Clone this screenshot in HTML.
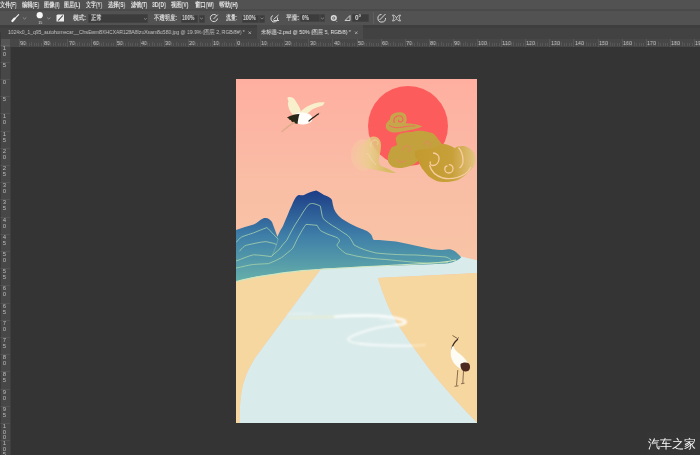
<!DOCTYPE html>
<html><head><meta charset="utf-8">
<style>
*{margin:0;padding:0;box-sizing:border-box}
html,body{width:700px;height:455px;overflow:hidden;background:#353535;font-family:"Liberation Sans",sans-serif;}
.abs{position:absolute}
#menu{left:0;top:0;width:700px;height:9px;background:#525252}
#mline{left:0;top:9px;width:700px;height:2px;background:#4a4a4a}
#opts{left:0;top:11px;width:700px;height:14px;background:#525252}
#strip{left:0;top:25px;width:700px;height:3px;background:#3e3e3e}
#tabs{left:0;top:28px;width:700px;height:11px;background:#424242}
#hruler{left:0;top:39px;width:700px;height:8px;background:#474747}
#vruler{left:0;top:47px;width:11px;height:408px;background:#474747}
#canvas{left:11px;top:47px;width:689px;height:408px;background:#343434}
#art{left:236px;top:79px;width:241px;height:344px;overflow:hidden}
.t{position:absolute;color:#d8d8d8;white-space:nowrap;line-height:1;will-change:transform}
.mi{font-size:6.5px;color:#e4e4e4;font-weight:bold;transform-origin:0 0}
.ol{font-size:6.5px;color:#dcdcdc;font-weight:bold;transform-origin:0 0}
.tt{font-size:5.8px;color:#c4c4c4;transform-origin:0 0}
.act{color:#e8e8e8}
.hr{font-size:6px;color:#c4c4c4;transform-origin:0 0}
.vr{left:2px;font-size:6px;color:#bcbcbc;width:5px;text-align:center}
.vr span{display:block;height:5.5px;line-height:5.5px}
.box{background:#3c3c3c;box-shadow:inset 0 0 0 0.5px #4a4a4a}
.tick{position:absolute;width:1px;background:#b0b0b0}
</style></head><body>
<div id="menu" class="abs"></div>
<div id="mline" class="abs"></div>
<div id="opts" class="abs"></div>
<div id="strip" class="abs"></div>
<div id="tabs" class="abs"></div>
<div id="hruler" class="abs"></div>
<div id="vruler" class="abs"></div>
<div id="canvas" class="abs"></div>














<!--UI-->
<div class="abs" style="left:1px;top:39px;width:9px;height:8px;background:#555555"></div>
<div class="abs" style="left:0;top:32px;width:1px;height:423px;background:#3a3a3a"></div>
<div class="abs" style="left:10px;top:47px;width:1px;height:408px;background:#3e3e3e"></div>
<div class="abs" style="left:256.5px;top:25px;width:106px;height:14px;background:#4b4b4b"></div>
<div class="abs box" style="left:87.5px;top:14px;width:60.5px;height:9px"></div>
<div class="abs box" style="left:180.5px;top:14.5px;width:17px;height:8px"></div>
<div class="abs box" style="left:198.5px;top:14.5px;width:6px;height:8px"></div>
<div class="abs box" style="left:241.5px;top:14.5px;width:17px;height:8px"></div>
<div class="abs box" style="left:259px;top:14.5px;width:6px;height:8px"></div>
<div class="abs box" style="left:300px;top:14px;width:20px;height:8px"></div>
<div class="abs box" style="left:320px;top:14px;width:5px;height:8px"></div>
<div class="abs box" style="left:351.5px;top:14px;width:17.5px;height:8px"></div>
<div class="abs" style="left:372.5px;top:12px;width:1px;height:12px;background:#5e5e5e"></div>
<svg class="abs" style="left:0;top:0;will-change:transform" width="420" height="40" viewBox="0 0 420 40">
<g fill="none" stroke-linecap="round">
<path d="M12.8,20.6 L18.6,14.6" stroke="#e8e8e8" stroke-width="1.2"/>
<path d="M12.4,21 L14.6,18.6" stroke="#f4f4f4" stroke-width="2.2"/>
<path d="M23.2,17.8 L24.6,19 L26,17.8" stroke="#9a9a9a" stroke-width="0.8"/>
<path d="M47.4,17.8 L48.8,19 L50.2,17.8" stroke="#9a9a9a" stroke-width="0.8"/>
<path d="M144.3,18.5 L145.4,19.5 L146.5,18.5" stroke="#a0a0a0" stroke-width="0.7"/>
<path d="M200.3,18 L201.5,19 L202.7,18" stroke="#a0a0a0" stroke-width="0.7"/>
<path d="M260.8,18 L262,19 L263.2,18" stroke="#a0a0a0" stroke-width="0.7"/>
<path d="M321.3,18 L322.5,19 L323.7,18" stroke="#a0a0a0" stroke-width="0.7"/>
</g>
<circle cx="39.7" cy="15.2" r="3.1" fill="#f6f6f6"/>
<text x="38.2" y="23.6" font-size="3.8" fill="#d8d8d8" font-family="Liberation Sans">15</text>
<path d="M57.5,14.5 L64,14.5 L64,21.5 L56.5,21.5 L56.5,15.5 Z" fill="#ececec"/>
<path d="M58.2,20.5 L62.8,15.5" stroke="#3a3a3a" stroke-width="1.1"/>
<g fill="none" stroke="#d8d8d8" stroke-width="1">
<path d="M216.5,15.5 A3.6,3.6 0 1 0 217.5,18.5"/>
<path d="M213.5,19 L217.8,14.6"/>
<path d="M277.5,17.5 A3.4,3.4 0 1 1 273,15.5"/>
<path d="M273.5,19.5 L278.5,15"/>
<path d="M273.5,20.5 L279,20.5"/>
<path d="M345,20.5 L350,15.5 L350,20.5 Z" stroke-width="0.9"/>
<path d="M385.5,18 A3.8,3.8 0 1 1 381.5,14.5"/>
<path d="M379.5,20 L385.5,14"/>
<path d="M392.5,15 C395,15 396,17 396.5,18 C397,17 398,15 400.5,15 L399,18 L400.5,21 C398,21 397,19.5 396.5,18.5 C396,19.5 395,21 392.5,21 L394,18 Z" stroke-width="0.8"/>
</g>
<circle cx="333.8" cy="18" r="2.3" fill="none" stroke="#dcdcdc" stroke-width="1.5"/>
<circle cx="333.8" cy="18" r="0.8" fill="#dcdcdc"/>
<circle cx="336.8" cy="21.5" r="0.5" fill="#bbb"/>
<path d="M248.5,31.5 L251,34 M251,31.5 L248.5,34 M355,31.5 L357.5,34 M357.5,31.5 L355,34" stroke="#bdbdbd" stroke-width="0.7"/>
</svg>
<div id="m0" class="t mi" style="left:0px;top:1.5px;transform:scaleX(0.739);">文件(F)</div>
<div id="m1" class="t mi" style="left:21.5px;top:1.5px;transform:scaleX(0.750);">编辑(E)</div>
<div id="m2" class="t mi" style="left:43.5px;top:1.5px;transform:scaleX(0.770);">图像(I)</div>
<div id="m3" class="t mi" style="left:64px;top:1.5px;transform:scaleX(0.717);">图层(L)</div>
<div id="m4" class="t mi" style="left:86px;top:1.5px;transform:scaleX(0.706);">文字(Y)</div>
<div id="m5" class="t mi" style="left:108px;top:1.5px;transform:scaleX(0.750);">选择(S)</div>
<div id="m6" class="t mi" style="left:131px;top:1.5px;transform:scaleX(0.731);">滤镜(T)</div>
<div id="m7" class="t mi" style="left:152.4px;top:1.5px;transform:scaleX(0.796);">3D(D)</div>
<div id="m8" class="t mi" style="left:171.3px;top:1.5px;transform:scaleX(0.759);">视图(V)</div>
<div id="m9" class="t mi" style="left:194.5px;top:1.5px;transform:scaleX(0.768);">窗口(W)</div>
<div id="m10" class="t mi" style="left:218.5px;top:1.5px;transform:scaleX(0.816);">帮助(H)</div>
<div id="o1" class="t ol" style="left:72.5px;top:14.5px;transform:scaleX(0.798);">模式:</div>
<div id="o2" class="t ol" style="left:91.1px;top:14.5px;transform:scaleX(0.779);">正常</div>
<div id="o3" class="t ol" style="left:154px;top:14.5px;transform:scaleX(0.762);">不透明度:</div>
<div id="o4" class="t ol" style="left:182px;top:15px;transform:scaleX(0.752);">100%</div>
<div id="o5" class="t ol" style="left:225.7px;top:14.5px;transform:scaleX(0.699);">流量:</div>
<div id="o6" class="t ol" style="left:242.5px;top:15px;transform:scaleX(0.782);">100%</div>
<div id="o7" class="t ol" style="left:286px;top:14.5px;transform:scaleX(0.804);">平滑:</div>
<div id="o8" class="t ol" style="left:302px;top:15px;transform:scaleX(0.744);">0%</div>
<div id="o9" class="t ol" style="left:355px;top:15px;transform:scaleX(0.965);">0°</div>
<div id="tb1" class="t tt" style="left:8.2px;top:30px;transform:scaleX(0.868);">1024x0_1_q95_autohomecar__ChsEwm8XHCXAR128A8IzuXsam8o580.jpg @ 19.9% (图层 2, RGB/8#) *</div>
<div id="tb2" class="t tt act" style="left:261.1px;top:30px;transform:scaleX(0.885);">未标题-2.psd @ 50% (图层 5, RGB/8) *</div>
<div class="tick" style="left:19.1px;top:39px;height:8px;opacity:.15"></div>
<div id="h0" class="t hr" style="left:20.299999999999994px;top:40px;transform:scaleX(0.897);">90</div>
<div class="tick" style="left:21.5px;top:43px;height:3px;opacity:.16"></div>
<div class="tick" style="left:23.9px;top:43px;height:3px;opacity:.16"></div>
<div class="tick" style="left:26.3px;top:43px;height:3px;opacity:.16"></div>
<div class="tick" style="left:28.7px;top:43px;height:3px;opacity:.16"></div>
<div class="tick" style="left:31.1px;top:42px;height:4px;opacity:.16"></div>
<div class="tick" style="left:33.6px;top:43px;height:3px;opacity:.16"></div>
<div class="tick" style="left:36.0px;top:43px;height:3px;opacity:.16"></div>
<div class="tick" style="left:38.4px;top:43px;height:3px;opacity:.16"></div>
<div class="tick" style="left:40.8px;top:43px;height:3px;opacity:.16"></div>
<div class="tick" style="left:43.2px;top:39px;height:8px;opacity:.15"></div>
<div id="h1" class="t hr" style="left:44.39999999999999px;top:40px;transform:scaleX(0.897);">80</div>
<div class="tick" style="left:45.6px;top:43px;height:3px;opacity:.16"></div>
<div class="tick" style="left:48.0px;top:43px;height:3px;opacity:.16"></div>
<div class="tick" style="left:50.4px;top:43px;height:3px;opacity:.16"></div>
<div class="tick" style="left:52.8px;top:43px;height:3px;opacity:.16"></div>
<div class="tick" style="left:55.2px;top:42px;height:4px;opacity:.16"></div>
<div class="tick" style="left:57.7px;top:43px;height:3px;opacity:.16"></div>
<div class="tick" style="left:60.1px;top:43px;height:3px;opacity:.16"></div>
<div class="tick" style="left:62.5px;top:43px;height:3px;opacity:.16"></div>
<div class="tick" style="left:64.9px;top:43px;height:3px;opacity:.16"></div>
<div class="tick" style="left:67.3px;top:39px;height:8px;opacity:.15"></div>
<div id="h2" class="t hr" style="left:68.49999999999999px;top:40px;transform:scaleX(0.897);">70</div>
<div class="tick" style="left:69.7px;top:43px;height:3px;opacity:.16"></div>
<div class="tick" style="left:72.1px;top:43px;height:3px;opacity:.16"></div>
<div class="tick" style="left:74.5px;top:43px;height:3px;opacity:.16"></div>
<div class="tick" style="left:76.9px;top:43px;height:3px;opacity:.16"></div>
<div class="tick" style="left:79.3px;top:42px;height:4px;opacity:.16"></div>
<div class="tick" style="left:81.8px;top:43px;height:3px;opacity:.16"></div>
<div class="tick" style="left:84.2px;top:43px;height:3px;opacity:.16"></div>
<div class="tick" style="left:86.6px;top:43px;height:3px;opacity:.16"></div>
<div class="tick" style="left:89.0px;top:43px;height:3px;opacity:.16"></div>
<div class="tick" style="left:91.4px;top:39px;height:8px;opacity:.15"></div>
<div id="h3" class="t hr" style="left:92.59999999999998px;top:40px;transform:scaleX(0.897);">60</div>
<div class="tick" style="left:93.8px;top:43px;height:3px;opacity:.16"></div>
<div class="tick" style="left:96.2px;top:43px;height:3px;opacity:.16"></div>
<div class="tick" style="left:98.6px;top:43px;height:3px;opacity:.16"></div>
<div class="tick" style="left:101.0px;top:43px;height:3px;opacity:.16"></div>
<div class="tick" style="left:103.4px;top:42px;height:4px;opacity:.16"></div>
<div class="tick" style="left:105.9px;top:43px;height:3px;opacity:.16"></div>
<div class="tick" style="left:108.3px;top:43px;height:3px;opacity:.16"></div>
<div class="tick" style="left:110.7px;top:43px;height:3px;opacity:.16"></div>
<div class="tick" style="left:113.1px;top:43px;height:3px;opacity:.16"></div>
<div class="tick" style="left:115.5px;top:39px;height:8px;opacity:.15"></div>
<div id="h4" class="t hr" style="left:116.7px;top:40px;transform:scaleX(0.897);">50</div>
<div class="tick" style="left:117.9px;top:43px;height:3px;opacity:.16"></div>
<div class="tick" style="left:120.3px;top:43px;height:3px;opacity:.16"></div>
<div class="tick" style="left:122.7px;top:43px;height:3px;opacity:.16"></div>
<div class="tick" style="left:125.1px;top:43px;height:3px;opacity:.16"></div>
<div class="tick" style="left:127.5px;top:42px;height:4px;opacity:.16"></div>
<div class="tick" style="left:130.0px;top:43px;height:3px;opacity:.16"></div>
<div class="tick" style="left:132.4px;top:43px;height:3px;opacity:.16"></div>
<div class="tick" style="left:134.8px;top:43px;height:3px;opacity:.16"></div>
<div class="tick" style="left:137.2px;top:43px;height:3px;opacity:.16"></div>
<div class="tick" style="left:139.6px;top:39px;height:8px;opacity:.15"></div>
<div id="h5" class="t hr" style="left:140.79999999999998px;top:40px;transform:scaleX(0.897);">40</div>
<div class="tick" style="left:142.0px;top:43px;height:3px;opacity:.16"></div>
<div class="tick" style="left:144.4px;top:43px;height:3px;opacity:.16"></div>
<div class="tick" style="left:146.8px;top:43px;height:3px;opacity:.16"></div>
<div class="tick" style="left:149.2px;top:43px;height:3px;opacity:.16"></div>
<div class="tick" style="left:151.7px;top:42px;height:4px;opacity:.16"></div>
<div class="tick" style="left:154.1px;top:43px;height:3px;opacity:.16"></div>
<div class="tick" style="left:156.5px;top:43px;height:3px;opacity:.16"></div>
<div class="tick" style="left:158.9px;top:43px;height:3px;opacity:.16"></div>
<div class="tick" style="left:161.3px;top:43px;height:3px;opacity:.16"></div>
<div class="tick" style="left:163.7px;top:39px;height:8px;opacity:.15"></div>
<div id="h6" class="t hr" style="left:164.89999999999998px;top:40px;transform:scaleX(0.897);">30</div>
<div class="tick" style="left:166.1px;top:43px;height:3px;opacity:.16"></div>
<div class="tick" style="left:168.5px;top:43px;height:3px;opacity:.16"></div>
<div class="tick" style="left:170.9px;top:43px;height:3px;opacity:.16"></div>
<div class="tick" style="left:173.3px;top:43px;height:3px;opacity:.16"></div>
<div class="tick" style="left:175.8px;top:42px;height:4px;opacity:.16"></div>
<div class="tick" style="left:178.2px;top:43px;height:3px;opacity:.16"></div>
<div class="tick" style="left:180.6px;top:43px;height:3px;opacity:.16"></div>
<div class="tick" style="left:183.0px;top:43px;height:3px;opacity:.16"></div>
<div class="tick" style="left:185.4px;top:43px;height:3px;opacity:.16"></div>
<div class="tick" style="left:187.8px;top:39px;height:8px;opacity:.15"></div>
<div id="h7" class="t hr" style="left:189.0px;top:40px;transform:scaleX(0.897);">20</div>
<div class="tick" style="left:190.2px;top:43px;height:3px;opacity:.16"></div>
<div class="tick" style="left:192.6px;top:43px;height:3px;opacity:.16"></div>
<div class="tick" style="left:195.0px;top:43px;height:3px;opacity:.16"></div>
<div class="tick" style="left:197.4px;top:43px;height:3px;opacity:.16"></div>
<div class="tick" style="left:199.9px;top:42px;height:4px;opacity:.16"></div>
<div class="tick" style="left:202.3px;top:43px;height:3px;opacity:.16"></div>
<div class="tick" style="left:204.7px;top:43px;height:3px;opacity:.16"></div>
<div class="tick" style="left:207.1px;top:43px;height:3px;opacity:.16"></div>
<div class="tick" style="left:209.5px;top:43px;height:3px;opacity:.16"></div>
<div class="tick" style="left:211.9px;top:39px;height:8px;opacity:.15"></div>
<div id="h8" class="t hr" style="left:213.1px;top:40px;transform:scaleX(0.897);">10</div>
<div class="tick" style="left:214.3px;top:43px;height:3px;opacity:.16"></div>
<div class="tick" style="left:216.7px;top:43px;height:3px;opacity:.16"></div>
<div class="tick" style="left:219.1px;top:43px;height:3px;opacity:.16"></div>
<div class="tick" style="left:221.5px;top:43px;height:3px;opacity:.16"></div>
<div class="tick" style="left:224.0px;top:42px;height:4px;opacity:.16"></div>
<div class="tick" style="left:226.4px;top:43px;height:3px;opacity:.16"></div>
<div class="tick" style="left:228.8px;top:43px;height:3px;opacity:.16"></div>
<div class="tick" style="left:231.2px;top:43px;height:3px;opacity:.16"></div>
<div class="tick" style="left:233.6px;top:43px;height:3px;opacity:.16"></div>
<div class="tick" style="left:236.0px;top:39px;height:8px;opacity:.15"></div>
<div id="h9" class="t hr" style="left:237.2px;top:40px;transform:scaleX(0.897);">0</div>
<div class="tick" style="left:238.4px;top:43px;height:3px;opacity:.16"></div>
<div class="tick" style="left:240.8px;top:43px;height:3px;opacity:.16"></div>
<div class="tick" style="left:243.2px;top:43px;height:3px;opacity:.16"></div>
<div class="tick" style="left:245.6px;top:43px;height:3px;opacity:.16"></div>
<div class="tick" style="left:248.1px;top:42px;height:4px;opacity:.16"></div>
<div class="tick" style="left:250.5px;top:43px;height:3px;opacity:.16"></div>
<div class="tick" style="left:252.9px;top:43px;height:3px;opacity:.16"></div>
<div class="tick" style="left:255.3px;top:43px;height:3px;opacity:.16"></div>
<div class="tick" style="left:257.7px;top:43px;height:3px;opacity:.16"></div>
<div class="tick" style="left:260.1px;top:39px;height:8px;opacity:.15"></div>
<div id="h10" class="t hr" style="left:261.3px;top:40px;transform:scaleX(0.897);">10</div>
<div class="tick" style="left:262.5px;top:43px;height:3px;opacity:.16"></div>
<div class="tick" style="left:264.9px;top:43px;height:3px;opacity:.16"></div>
<div class="tick" style="left:267.3px;top:43px;height:3px;opacity:.16"></div>
<div class="tick" style="left:269.7px;top:43px;height:3px;opacity:.16"></div>
<div class="tick" style="left:272.2px;top:42px;height:4px;opacity:.16"></div>
<div class="tick" style="left:274.6px;top:43px;height:3px;opacity:.16"></div>
<div class="tick" style="left:277.0px;top:43px;height:3px;opacity:.16"></div>
<div class="tick" style="left:279.4px;top:43px;height:3px;opacity:.16"></div>
<div class="tick" style="left:281.8px;top:43px;height:3px;opacity:.16"></div>
<div class="tick" style="left:284.2px;top:39px;height:8px;opacity:.15"></div>
<div id="h11" class="t hr" style="left:285.4px;top:40px;transform:scaleX(0.897);">20</div>
<div class="tick" style="left:286.6px;top:43px;height:3px;opacity:.16"></div>
<div class="tick" style="left:289.0px;top:43px;height:3px;opacity:.16"></div>
<div class="tick" style="left:291.4px;top:43px;height:3px;opacity:.16"></div>
<div class="tick" style="left:293.8px;top:43px;height:3px;opacity:.16"></div>
<div class="tick" style="left:296.2px;top:42px;height:4px;opacity:.16"></div>
<div class="tick" style="left:298.7px;top:43px;height:3px;opacity:.16"></div>
<div class="tick" style="left:301.1px;top:43px;height:3px;opacity:.16"></div>
<div class="tick" style="left:303.5px;top:43px;height:3px;opacity:.16"></div>
<div class="tick" style="left:305.9px;top:43px;height:3px;opacity:.16"></div>
<div class="tick" style="left:308.3px;top:39px;height:8px;opacity:.15"></div>
<div id="h12" class="t hr" style="left:309.5px;top:40px;transform:scaleX(0.897);">30</div>
<div class="tick" style="left:310.7px;top:43px;height:3px;opacity:.16"></div>
<div class="tick" style="left:313.1px;top:43px;height:3px;opacity:.16"></div>
<div class="tick" style="left:315.5px;top:43px;height:3px;opacity:.16"></div>
<div class="tick" style="left:317.9px;top:43px;height:3px;opacity:.16"></div>
<div class="tick" style="left:320.4px;top:42px;height:4px;opacity:.16"></div>
<div class="tick" style="left:322.8px;top:43px;height:3px;opacity:.16"></div>
<div class="tick" style="left:325.2px;top:43px;height:3px;opacity:.16"></div>
<div class="tick" style="left:327.6px;top:43px;height:3px;opacity:.16"></div>
<div class="tick" style="left:330.0px;top:43px;height:3px;opacity:.16"></div>
<div class="tick" style="left:332.4px;top:39px;height:8px;opacity:.15"></div>
<div id="h13" class="t hr" style="left:333.59999999999997px;top:40px;transform:scaleX(0.897);">40</div>
<div class="tick" style="left:334.8px;top:43px;height:3px;opacity:.16"></div>
<div class="tick" style="left:337.2px;top:43px;height:3px;opacity:.16"></div>
<div class="tick" style="left:339.6px;top:43px;height:3px;opacity:.16"></div>
<div class="tick" style="left:342.0px;top:43px;height:3px;opacity:.16"></div>
<div class="tick" style="left:344.4px;top:42px;height:4px;opacity:.16"></div>
<div class="tick" style="left:346.9px;top:43px;height:3px;opacity:.16"></div>
<div class="tick" style="left:349.3px;top:43px;height:3px;opacity:.16"></div>
<div class="tick" style="left:351.7px;top:43px;height:3px;opacity:.16"></div>
<div class="tick" style="left:354.1px;top:43px;height:3px;opacity:.16"></div>
<div class="tick" style="left:356.5px;top:39px;height:8px;opacity:.15"></div>
<div id="h14" class="t hr" style="left:357.7px;top:40px;transform:scaleX(0.897);">50</div>
<div class="tick" style="left:358.9px;top:43px;height:3px;opacity:.16"></div>
<div class="tick" style="left:361.3px;top:43px;height:3px;opacity:.16"></div>
<div class="tick" style="left:363.7px;top:43px;height:3px;opacity:.16"></div>
<div class="tick" style="left:366.1px;top:43px;height:3px;opacity:.16"></div>
<div class="tick" style="left:368.6px;top:42px;height:4px;opacity:.16"></div>
<div class="tick" style="left:371.0px;top:43px;height:3px;opacity:.16"></div>
<div class="tick" style="left:373.4px;top:43px;height:3px;opacity:.16"></div>
<div class="tick" style="left:375.8px;top:43px;height:3px;opacity:.16"></div>
<div class="tick" style="left:378.2px;top:43px;height:3px;opacity:.16"></div>
<div class="tick" style="left:380.6px;top:39px;height:8px;opacity:.15"></div>
<div id="h15" class="t hr" style="left:381.8px;top:40px;transform:scaleX(0.897);">60</div>
<div class="tick" style="left:383.0px;top:43px;height:3px;opacity:.16"></div>
<div class="tick" style="left:385.4px;top:43px;height:3px;opacity:.16"></div>
<div class="tick" style="left:387.8px;top:43px;height:3px;opacity:.16"></div>
<div class="tick" style="left:390.2px;top:43px;height:3px;opacity:.16"></div>
<div class="tick" style="left:392.7px;top:42px;height:4px;opacity:.16"></div>
<div class="tick" style="left:395.1px;top:43px;height:3px;opacity:.16"></div>
<div class="tick" style="left:397.5px;top:43px;height:3px;opacity:.16"></div>
<div class="tick" style="left:399.9px;top:43px;height:3px;opacity:.16"></div>
<div class="tick" style="left:402.3px;top:43px;height:3px;opacity:.16"></div>
<div class="tick" style="left:404.7px;top:39px;height:8px;opacity:.15"></div>
<div id="h16" class="t hr" style="left:405.90000000000003px;top:40px;transform:scaleX(0.897);">70</div>
<div class="tick" style="left:407.1px;top:43px;height:3px;opacity:.16"></div>
<div class="tick" style="left:409.5px;top:43px;height:3px;opacity:.16"></div>
<div class="tick" style="left:411.9px;top:43px;height:3px;opacity:.16"></div>
<div class="tick" style="left:414.3px;top:43px;height:3px;opacity:.16"></div>
<div class="tick" style="left:416.8px;top:42px;height:4px;opacity:.16"></div>
<div class="tick" style="left:419.2px;top:43px;height:3px;opacity:.16"></div>
<div class="tick" style="left:421.6px;top:43px;height:3px;opacity:.16"></div>
<div class="tick" style="left:424.0px;top:43px;height:3px;opacity:.16"></div>
<div class="tick" style="left:426.4px;top:43px;height:3px;opacity:.16"></div>
<div class="tick" style="left:428.8px;top:39px;height:8px;opacity:.15"></div>
<div id="h17" class="t hr" style="left:430.0px;top:40px;transform:scaleX(0.897);">80</div>
<div class="tick" style="left:431.2px;top:43px;height:3px;opacity:.16"></div>
<div class="tick" style="left:433.6px;top:43px;height:3px;opacity:.16"></div>
<div class="tick" style="left:436.0px;top:43px;height:3px;opacity:.16"></div>
<div class="tick" style="left:438.4px;top:43px;height:3px;opacity:.16"></div>
<div class="tick" style="left:440.9px;top:42px;height:4px;opacity:.16"></div>
<div class="tick" style="left:443.3px;top:43px;height:3px;opacity:.16"></div>
<div class="tick" style="left:445.7px;top:43px;height:3px;opacity:.16"></div>
<div class="tick" style="left:448.1px;top:43px;height:3px;opacity:.16"></div>
<div class="tick" style="left:450.5px;top:43px;height:3px;opacity:.16"></div>
<div class="tick" style="left:452.9px;top:39px;height:8px;opacity:.15"></div>
<div id="h18" class="t hr" style="left:454.09999999999997px;top:40px;transform:scaleX(0.897);">90</div>
<div class="tick" style="left:455.3px;top:43px;height:3px;opacity:.16"></div>
<div class="tick" style="left:457.7px;top:43px;height:3px;opacity:.16"></div>
<div class="tick" style="left:460.1px;top:43px;height:3px;opacity:.16"></div>
<div class="tick" style="left:462.5px;top:43px;height:3px;opacity:.16"></div>
<div class="tick" style="left:464.9px;top:42px;height:4px;opacity:.16"></div>
<div class="tick" style="left:467.4px;top:43px;height:3px;opacity:.16"></div>
<div class="tick" style="left:469.8px;top:43px;height:3px;opacity:.16"></div>
<div class="tick" style="left:472.2px;top:43px;height:3px;opacity:.16"></div>
<div class="tick" style="left:474.6px;top:43px;height:3px;opacity:.16"></div>
<div class="tick" style="left:477.0px;top:39px;height:8px;opacity:.15"></div>
<div id="h19" class="t hr" style="left:478.2px;top:40px;transform:scaleX(0.899);">100</div>
<div class="tick" style="left:479.4px;top:43px;height:3px;opacity:.16"></div>
<div class="tick" style="left:481.8px;top:43px;height:3px;opacity:.16"></div>
<div class="tick" style="left:484.2px;top:43px;height:3px;opacity:.16"></div>
<div class="tick" style="left:486.6px;top:43px;height:3px;opacity:.16"></div>
<div class="tick" style="left:489.1px;top:42px;height:4px;opacity:.16"></div>
<div class="tick" style="left:491.5px;top:43px;height:3px;opacity:.16"></div>
<div class="tick" style="left:493.9px;top:43px;height:3px;opacity:.16"></div>
<div class="tick" style="left:496.3px;top:43px;height:3px;opacity:.16"></div>
<div class="tick" style="left:498.7px;top:43px;height:3px;opacity:.16"></div>
<div class="tick" style="left:501.1px;top:39px;height:8px;opacity:.15"></div>
<div id="h20" class="t hr" style="left:502.3px;top:40px;transform:scaleX(0.940);">110</div>
<div class="tick" style="left:503.5px;top:43px;height:3px;opacity:.16"></div>
<div class="tick" style="left:505.9px;top:43px;height:3px;opacity:.16"></div>
<div class="tick" style="left:508.3px;top:43px;height:3px;opacity:.16"></div>
<div class="tick" style="left:510.7px;top:43px;height:3px;opacity:.16"></div>
<div class="tick" style="left:513.1px;top:42px;height:4px;opacity:.16"></div>
<div class="tick" style="left:515.6px;top:43px;height:3px;opacity:.16"></div>
<div class="tick" style="left:518.0px;top:43px;height:3px;opacity:.16"></div>
<div class="tick" style="left:520.4px;top:43px;height:3px;opacity:.16"></div>
<div class="tick" style="left:522.8px;top:43px;height:3px;opacity:.16"></div>
<div class="tick" style="left:525.2px;top:39px;height:8px;opacity:.15"></div>
<div id="h21" class="t hr" style="left:526.4000000000001px;top:40px;transform:scaleX(0.899);">120</div>
<div class="tick" style="left:527.6px;top:43px;height:3px;opacity:.16"></div>
<div class="tick" style="left:530.0px;top:43px;height:3px;opacity:.16"></div>
<div class="tick" style="left:532.4px;top:43px;height:3px;opacity:.16"></div>
<div class="tick" style="left:534.8px;top:43px;height:3px;opacity:.16"></div>
<div class="tick" style="left:537.2px;top:42px;height:4px;opacity:.16"></div>
<div class="tick" style="left:539.7px;top:43px;height:3px;opacity:.16"></div>
<div class="tick" style="left:542.1px;top:43px;height:3px;opacity:.16"></div>
<div class="tick" style="left:544.5px;top:43px;height:3px;opacity:.16"></div>
<div class="tick" style="left:546.9px;top:43px;height:3px;opacity:.16"></div>
<div class="tick" style="left:549.3px;top:39px;height:8px;opacity:.15"></div>
<div id="h22" class="t hr" style="left:550.5px;top:40px;transform:scaleX(0.899);">130</div>
<div class="tick" style="left:551.7px;top:43px;height:3px;opacity:.16"></div>
<div class="tick" style="left:554.1px;top:43px;height:3px;opacity:.16"></div>
<div class="tick" style="left:556.5px;top:43px;height:3px;opacity:.16"></div>
<div class="tick" style="left:558.9px;top:43px;height:3px;opacity:.16"></div>
<div class="tick" style="left:561.3px;top:42px;height:4px;opacity:.16"></div>
<div class="tick" style="left:563.8px;top:43px;height:3px;opacity:.16"></div>
<div class="tick" style="left:566.2px;top:43px;height:3px;opacity:.16"></div>
<div class="tick" style="left:568.6px;top:43px;height:3px;opacity:.16"></div>
<div class="tick" style="left:571.0px;top:43px;height:3px;opacity:.16"></div>
<div class="tick" style="left:573.4px;top:39px;height:8px;opacity:.15"></div>
<div id="h23" class="t hr" style="left:574.6000000000001px;top:40px;transform:scaleX(0.899);">140</div>
<div class="tick" style="left:575.8px;top:43px;height:3px;opacity:.16"></div>
<div class="tick" style="left:578.2px;top:43px;height:3px;opacity:.16"></div>
<div class="tick" style="left:580.6px;top:43px;height:3px;opacity:.16"></div>
<div class="tick" style="left:583.0px;top:43px;height:3px;opacity:.16"></div>
<div class="tick" style="left:585.5px;top:42px;height:4px;opacity:.16"></div>
<div class="tick" style="left:587.9px;top:43px;height:3px;opacity:.16"></div>
<div class="tick" style="left:590.3px;top:43px;height:3px;opacity:.16"></div>
<div class="tick" style="left:592.7px;top:43px;height:3px;opacity:.16"></div>
<div class="tick" style="left:595.1px;top:43px;height:3px;opacity:.16"></div>
<div class="tick" style="left:597.5px;top:39px;height:8px;opacity:.15"></div>
<div id="h24" class="t hr" style="left:598.7px;top:40px;transform:scaleX(0.899);">150</div>
<div class="tick" style="left:599.9px;top:43px;height:3px;opacity:.16"></div>
<div class="tick" style="left:602.3px;top:43px;height:3px;opacity:.16"></div>
<div class="tick" style="left:604.7px;top:43px;height:3px;opacity:.16"></div>
<div class="tick" style="left:607.1px;top:43px;height:3px;opacity:.16"></div>
<div class="tick" style="left:609.5px;top:42px;height:4px;opacity:.16"></div>
<div class="tick" style="left:612.0px;top:43px;height:3px;opacity:.16"></div>
<div class="tick" style="left:614.4px;top:43px;height:3px;opacity:.16"></div>
<div class="tick" style="left:616.8px;top:43px;height:3px;opacity:.16"></div>
<div class="tick" style="left:619.2px;top:43px;height:3px;opacity:.16"></div>
<div class="tick" style="left:621.6px;top:39px;height:8px;opacity:.15"></div>
<div id="h25" class="t hr" style="left:622.8000000000001px;top:40px;transform:scaleX(0.899);">160</div>
<div class="tick" style="left:624.0px;top:43px;height:3px;opacity:.16"></div>
<div class="tick" style="left:626.4px;top:43px;height:3px;opacity:.16"></div>
<div class="tick" style="left:628.8px;top:43px;height:3px;opacity:.16"></div>
<div class="tick" style="left:631.2px;top:43px;height:3px;opacity:.16"></div>
<div class="tick" style="left:633.6px;top:42px;height:4px;opacity:.16"></div>
<div class="tick" style="left:636.1px;top:43px;height:3px;opacity:.16"></div>
<div class="tick" style="left:638.5px;top:43px;height:3px;opacity:.16"></div>
<div class="tick" style="left:640.9px;top:43px;height:3px;opacity:.16"></div>
<div class="tick" style="left:643.3px;top:43px;height:3px;opacity:.16"></div>
<div class="tick" style="left:645.7px;top:39px;height:8px;opacity:.15"></div>
<div id="h26" class="t hr" style="left:646.9000000000001px;top:40px;transform:scaleX(0.899);">170</div>
<div class="tick" style="left:648.1px;top:43px;height:3px;opacity:.16"></div>
<div class="tick" style="left:650.5px;top:43px;height:3px;opacity:.16"></div>
<div class="tick" style="left:652.9px;top:43px;height:3px;opacity:.16"></div>
<div class="tick" style="left:655.3px;top:43px;height:3px;opacity:.16"></div>
<div class="tick" style="left:657.8px;top:42px;height:4px;opacity:.16"></div>
<div class="tick" style="left:660.2px;top:43px;height:3px;opacity:.16"></div>
<div class="tick" style="left:662.6px;top:43px;height:3px;opacity:.16"></div>
<div class="tick" style="left:665.0px;top:43px;height:3px;opacity:.16"></div>
<div class="tick" style="left:667.4px;top:43px;height:3px;opacity:.16"></div>
<div class="tick" style="left:669.8px;top:39px;height:8px;opacity:.15"></div>
<div id="h27" class="t hr" style="left:671.0px;top:40px;transform:scaleX(0.899);">180</div>
<div class="tick" style="left:672.2px;top:43px;height:3px;opacity:.16"></div>
<div class="tick" style="left:674.6px;top:43px;height:3px;opacity:.16"></div>
<div class="tick" style="left:677.0px;top:43px;height:3px;opacity:.16"></div>
<div class="tick" style="left:679.4px;top:43px;height:3px;opacity:.16"></div>
<div class="tick" style="left:681.8px;top:42px;height:4px;opacity:.16"></div>
<div class="tick" style="left:684.3px;top:43px;height:3px;opacity:.16"></div>
<div class="tick" style="left:686.7px;top:43px;height:3px;opacity:.16"></div>
<div class="tick" style="left:689.1px;top:43px;height:3px;opacity:.16"></div>
<div class="tick" style="left:691.5px;top:43px;height:3px;opacity:.16"></div>
<div class="tick" style="left:693.9px;top:39px;height:8px;opacity:.15"></div>
<div id="h28" class="t hr" style="left:695.1000000000001px;top:40px;transform:scaleX(0.899);">190</div>
<div class="tick" style="left:696.3px;top:43px;height:3px;opacity:.16"></div>
<div class="tick" style="left:698.7px;top:43px;height:3px;opacity:.16"></div>
<div class="tick" style="left:701.1px;top:43px;height:3px;opacity:.16"></div>
<div class="tick" style="left:703.5px;top:43px;height:3px;opacity:.16"></div>
<div class="tick" style="left:706.0px;top:42px;height:4px;opacity:.16"></div>
<div class="tick" style="left:708.4px;top:43px;height:3px;opacity:.16"></div>
<div class="tick" style="left:710.8px;top:43px;height:3px;opacity:.16"></div>
<div class="tick" style="left:713.2px;top:43px;height:3px;opacity:.16"></div>
<div class="tick" style="left:715.6px;top:43px;height:3px;opacity:.16"></div>
<div class="tick" style="left:0;top:44.6px;width:10px;height:1px;opacity:.12"></div>
<div class="t vr" style="top:45.6px"><span>1</span><span>0</span></div>
<div class="tick" style="left:0;top:61.8px;width:10px;height:1px;opacity:.12"></div>
<div class="t vr" style="top:62.8px"><span>5</span></div>
<div class="tick" style="left:0;top:79.0px;width:10px;height:1px;opacity:.12"></div>
<div class="t vr" style="top:80.0px"><span>0</span></div>
<div class="tick" style="left:0;top:96.2px;width:10px;height:1px;opacity:.12"></div>
<div class="t vr" style="top:97.2px"><span>5</span></div>
<div class="tick" style="left:0;top:113.4px;width:10px;height:1px;opacity:.12"></div>
<div class="t vr" style="top:114.4px"><span>1</span><span>0</span></div>
<div class="tick" style="left:0;top:130.6px;width:10px;height:1px;opacity:.12"></div>
<div class="t vr" style="top:131.6px"><span>1</span><span>5</span></div>
<div class="tick" style="left:0;top:147.8px;width:10px;height:1px;opacity:.12"></div>
<div class="t vr" style="top:148.8px"><span>2</span><span>0</span></div>
<div class="tick" style="left:0;top:165.0px;width:10px;height:1px;opacity:.12"></div>
<div class="t vr" style="top:166.0px"><span>2</span><span>5</span></div>
<div class="tick" style="left:0;top:182.2px;width:10px;height:1px;opacity:.12"></div>
<div class="t vr" style="top:183.2px"><span>3</span><span>0</span></div>
<div class="tick" style="left:0;top:199.4px;width:10px;height:1px;opacity:.12"></div>
<div class="t vr" style="top:200.4px"><span>3</span><span>5</span></div>
<div class="tick" style="left:0;top:216.6px;width:10px;height:1px;opacity:.12"></div>
<div class="t vr" style="top:217.6px"><span>4</span><span>0</span></div>
<div class="tick" style="left:0;top:233.8px;width:10px;height:1px;opacity:.12"></div>
<div class="t vr" style="top:234.8px"><span>4</span><span>5</span></div>
<div class="tick" style="left:0;top:251.0px;width:10px;height:1px;opacity:.12"></div>
<div class="t vr" style="top:252.0px"><span>5</span><span>0</span></div>
<div class="tick" style="left:0;top:268.2px;width:10px;height:1px;opacity:.12"></div>
<div class="t vr" style="top:269.2px"><span>5</span><span>5</span></div>
<div class="tick" style="left:0;top:285.4px;width:10px;height:1px;opacity:.12"></div>
<div class="t vr" style="top:286.4px"><span>6</span><span>0</span></div>
<div class="tick" style="left:0;top:302.6px;width:10px;height:1px;opacity:.12"></div>
<div class="t vr" style="top:303.6px"><span>6</span><span>5</span></div>
<div class="tick" style="left:0;top:319.8px;width:10px;height:1px;opacity:.12"></div>
<div class="t vr" style="top:320.8px"><span>7</span><span>0</span></div>
<div class="tick" style="left:0;top:337.0px;width:10px;height:1px;opacity:.12"></div>
<div class="t vr" style="top:338.0px"><span>7</span><span>5</span></div>
<div class="tick" style="left:0;top:354.2px;width:10px;height:1px;opacity:.12"></div>
<div class="t vr" style="top:355.2px"><span>8</span><span>0</span></div>
<div class="tick" style="left:0;top:371.4px;width:10px;height:1px;opacity:.12"></div>
<div class="t vr" style="top:372.4px"><span>8</span><span>5</span></div>
<div class="tick" style="left:0;top:388.6px;width:10px;height:1px;opacity:.12"></div>
<div class="t vr" style="top:389.6px"><span>9</span><span>0</span></div>
<div class="tick" style="left:0;top:405.8px;width:10px;height:1px;opacity:.12"></div>
<div class="t vr" style="top:406.8px"><span>9</span><span>5</span></div>
<div class="tick" style="left:0;top:423.0px;width:10px;height:1px;opacity:.12"></div>
<div class="t vr" style="top:424.0px"><span>1</span><span>0</span><span>0</span></div>
<div class="tick" style="left:0;top:440.2px;width:10px;height:1px;opacity:.12"></div>
<div class="t vr" style="top:441.2px"><span>1</span><span>0</span><span>5</span></div>
<div class="tick" style="left:0;top:457.4px;width:10px;height:1px;opacity:.12"></div>
<div class="t vr" style="top:458.4px"><span>1</span><span>1</span><span>0</span></div>
<!--/UI-->
<div id="art" class="abs">
<svg width="241" height="344" viewBox="0 0 241 344">
<defs>
<linearGradient id="sky" x1="0" y1="0" x2="0" y2="1">
<stop offset="0" stop-color="#ffafa0"/>
<stop offset="0.16" stop-color="#fcb6a4"/>
<stop offset="0.3" stop-color="#f9bea5"/>
<stop offset="0.55" stop-color="#f8c4a6"/>
<stop offset="1" stop-color="#f8c8a8"/>
</linearGradient>
<linearGradient id="mtn" x1="0" y1="111" x2="0" y2="203" gradientUnits="userSpaceOnUse">
<stop offset="0" stop-color="#1c3c86"/>
<stop offset="0.5" stop-color="#3f7fa8"/>
<stop offset="1" stop-color="#66b0aa"/>
</linearGradient>
<linearGradient id="gold" x1="115" y1="0" x2="241" y2="0" gradientUnits="userSpaceOnUse">
<stop offset="0" stop-color="#f0d0a0" stop-opacity="0.3"/>
<stop offset="0.3" stop-color="#d8bc70"/>
<stop offset="0.6" stop-color="#c9a23c"/>
<stop offset="1" stop-color="#c09030"/>
</linearGradient>
</defs>
<rect width="241" height="344" fill="url(#sky)"/>
<circle cx="172" cy="47" r="40" fill="#fd5c5c"/>
<!-- clouds -->
<defs>
<linearGradient id="gL" x1="118" y1="0" x2="150" y2="0" gradientUnits="userSpaceOnUse">
<stop offset="0" stop-color="#f0d098" stop-opacity="0.2"/>
<stop offset="0.5" stop-color="#e8cc88" stop-opacity="0.8"/>
<stop offset="1" stop-color="#d8bc66"/>
</linearGradient>
<linearGradient id="gR" x1="179" y1="0" x2="241" y2="0" gradientUnits="userSpaceOnUse">
<stop offset="0" stop-color="#c39a2e"/>
<stop offset="0.6" stop-color="#c8a03a"/>
<stop offset="1" stop-color="#e6c786"/>
</linearGradient>
</defs>
<ellipse cx="127" cy="76" rx="12" ry="16" fill="#f0d4a0" fill-opacity="0.35"/>
<path fill="url(#gL)" d="M145,66 C145,61 142,57.5 138,57.5 C134,57.5 131,60 130,63 C126,64 121,68 120,74 C119,80 122,86 128,88 C133,90 140,91 148,92.5 C153,93.5 157,94 160,94 C156,91.5 150,89 145,87 C143,85 142,82 143,78 C144,75 145,71 145,66 Z"/>
<g fill="none" stroke="#f6d8b8" stroke-width="0.9" stroke-opacity="0.7">
<path d="M135,68 C134,64 136,61 139,61 C142,61 143,64 141,66"/>
<path d="M131,74 C134,78 136,82 140,86"/>
</g>
<path fill="#c7a54a" d="M186.4,47.4 C183,46 180,45.3 177.5,45.1 C175,44.8 172,44.5 169.6,44.3 C170.5,42.5 171,41 170.6,39.8 C170.5,37.5 170,36 168.7,34.8 C167,33.5 165,33.2 162.7,33.3 C160,33.5 157.5,34.5 155.8,35.8 C154.5,37 154,39 153.8,40.8 C152,42 150.5,44 149.9,45.7 C149.5,47.5 150,49.5 150.9,50.6 C153,52.5 155.5,53.5 157.8,53.6 C161,53.5 164.5,53 167.7,52.2 C172,51.5 176,50.5 179.5,49.7 C182,49 184.5,48.2 186.4,47.4 Z"/>
<g fill="none" stroke="#f9605c" stroke-linecap="round">
<path stroke-width="1.1" d="M158.2,43.5 C156.8,40 159.2,36.8 163,36.8 C166.5,36.8 168,40 166.3,42.2 C164.8,43.8 162.2,43.2 162.6,41"/>
<path stroke-width="0.9" d="M153.5,46.5 C157,49 162,49.2 168,47.8 C172,47 176,46.8 179,47"/>
</g>
<path fill="#c3a23e" d="M159.8,59 C161,56 164,54.3 166.4,54.3 C170,53 173,53 175.6,53 C179,52 181,51.7 183.5,51.7 C186,51.5 188,52 190.1,52.4 C193,53 195,53.5 196.7,54.3 C199,56 201,58 202,60.3 C204,62 205,64 206,65.5 L207,72 C203,72 199,71 195,72 C190,74 186,78 182,82 C178,86 172,88 166,89 C160,89.5 156,88 154.5,86 C152,84 151.5,81 151.9,78 C152,76 152.5,74.5 153.2,73.5 C154,71 155,69 155.9,68.2 C158,67 160.5,67 161.1,65.5 C160.5,63 159.5,61 159.8,59 Z"/>
<g fill="none" stroke="#ee7a6a" stroke-width="0.9" stroke-opacity="0.8">
<path d="M166,72 C166,68 169,66 172,67 C175,68 175,72 172,73"/>
<path d="M188,66 C188,63 191,62 193,63 C195,64 195,67 193,68"/>
<path d="M160,80 C163,84 168,84 170,81"/>
</g>
<path fill="url(#gR)" d="M179,71.7 C185,70 192,70 198.3,69.3 C201,67 204,65 206.8,65 C209,65 211,65.5 212.8,66.3 C215,67 217,68 218.9,69.3 C220,68 221,67.5 222.5,67.5 C224,67 226,66.8 227.3,66.9 C229.5,67 231.5,68 233.3,69.3 C235.5,71 237,72.5 238.2,74.1 C239.5,77 239.8,80 239.4,82.6 C239,85.5 237.5,88 235.8,89.8 C233.5,92 231.5,94 229.7,95.9 C227,98 224,100 221.3,101.3 C217,102.5 213,103 209.2,103.1 C206,103 203,102.5 200.7,101.9 C197,100.5 194.5,99 192.3,97.1 C190,94.5 188,92 186.2,89.8 C184.5,87 183.5,85 182.6,82.6 C181.5,80 180,79 179,77.7 Z"/>
<g fill="none" stroke="#f7cda0" stroke-width="1.3">
<path d="M197,74 C201,74 203.5,77 203,80.5 C202.5,84 200,86.5 197,86.5 C194.5,86.5 193.5,84.5 194.5,82.5"/>
<path d="M212.8,85.6 C215.5,85.6 217,87.5 217,89.8 C217,92.2 215,94 212.8,94 C210.5,94 208.8,92.2 208.8,90 C208.8,88 210,86.8 211.5,86.8"/>
<path d="M193.5,86 C195,92 200,97 207,99 C214,100.5 222,99 229,95 C232,93 234,90 235,88"/>
<path d="M222.5,68.5 C225.5,72 227,77 227,81.5 C227,85 225.5,87.5 223.5,89"/>
</g>
<!-- river -->
<path fill="#d9ebea" d="M87,185 L225,177.5 L241,181.2 L241,194 L141.9,198.9 C146,212 150,222 155,233 C165,252 180,272 195,292 C210,311 225,327 241,343.5 L241,344 L3.5,344 C3.5,332 4,320 6,310 C9,296 15,284 23.1,273.3 L84.3,190.5 L87,190 Z"/>
<!-- right sand -->
<path fill="#f7d7a0" d="M141.9,198.9 C170,197.5 210,196 241,194 L241,343.5 C225,327 210,311 195,292 C180,272 165,252 155,233 C150,222 146,212 141.9,198.9 Z"/>
<!-- left sand -->
<path fill="#f7d7a0" d="M0,200 L88,188 L84.3,190.5 L23.1,273.3 C15,284 9,296 6,310 C4,320 3.5,332 3.5,344 L0,344 Z"/>
<!-- mountain -->
<path fill="url(#mtn)" d="M0,151 C6,149 12,147 17.6,145.6 C21,144 24,141 27,139.5 C31,138 34,140 36,143 C38,148 40,154 41.4,157.7 C43,154 45,150 47,147 C50,140 53,132 56,126 C58,121 60,117 62.7,115.9 C65,116 66,116.6 68,116 C72,114 76,112 80.3,111.5 C84,113 86,115 88,116 C92,117 95,119 96,121 C96.5,124 97,127 98,130 C100,135 104,139 110,142.3 C114,145 120,148 126,150 C130,151.5 134,153 136,157 C136.5,159 137,160.6 138,161 C145,161 152,161.5 160,162.6 C168,164 176,166 186,168 C194,170 200,171 206,171 C210,171 213,170 215,170.5 C218,171 220,173 222,175 C223.5,176.5 225,177.5 225,178.5 C223,180.5 220,182 216,183.5 C212,184.5 205,185 196,185.2 C180,186 160,186.5 140,187 C120,188 100,189 88,189.5 C66,191.8 44,194 22,197.3 C14,199 6,201 0,202.8 Z"/>
<!-- mountain base light line -->
<path fill="none" stroke="#cfe6c0" stroke-width="1.2" d="M0,202.5 C14,199 40,194.5 66,191.6 C100,189 140,187 180,185 C200,184 212,183 220,181"/>
<!-- contours -->
<g fill="none" stroke="#acd6ac" stroke-width="0.9" stroke-opacity="0.85" stroke-linejoin="round">
<path d="M0,163.5 C3,160 5,158 7,157.4 C11,156 14,155 17.6,153.9 C22,152 27,150 30.8,148.6 C33,150 35,153 37.8,155.6 C39,157 41,159 42.2,160"/>
<path d="M3.5,172.3 C6,169 8,167 10.5,166.2 C16,165 24,163 29.9,162.6 C33,163 35,164 37.8,164.4 L40.5,165.5"/>
<path d="M0,182 C6,180 12,177 17.6,175.8 C24,176 30,177 35.2,177.6 C38,175 40,173 42.8,170.9 C45,168 48,164 50.8,161.2 C54,155 58,147 62.2,141 C65,137 69,129 73.2,125.1 C75,124.5 76,124.5 77.1,124.5 C80,125 82,126 84.4,127.1 C85,130 85.5,133 86,136 C86.5,138 87,139.5 88.4,140.8 C91,143 94,145 96.8,146.9 C101,149 106,153 110,155.3 C113,157 115,160 118,166 C125,170 132,172 140,174 C155,175.5 168,176 180,176 C195,177 205,177.5 210,178 C213,179 215,180.5 216,182"/>
<path d="M0,189 C6,188 12,186 17.6,185.5 C22,185 28,185 32.5,184.6 C37,183 41,181 45.7,178.5 C50,175 54,172 56.9,169.1 C59,165 61,160 63,156.8 C65,153 68,148 70,145.4 C73,145.5 77,146 81.1,146.3 C82,148 83,150 84.7,151.7 C87,153 89,154 92,155.3 C95,156.5 99,157.5 101.7,159 C103,160 103.5,161 103.5,162 C103,163.5 101,165 101,166.2 C102,168 104,170 105.3,171 C107,172.5 109,174 110,174.7 C114,175.5 116,176 120,177 C130,179 140,180 150,180.5 C165,182 180,183.5 190,184 C200,184 208,183.7 212,183.4"/>
<path stroke-opacity="0.4" d="M42,160 C41,165 39,170 36,177"/>
</g>
<!-- waves -->
<filter id="blr" x="-10%" y="-50%" width="120%" height="200%"><feGaussianBlur stdDeviation="0.8"/></filter>
<g fill="none" stroke-linecap="round" filter="url(#blr)">
<path stroke="#f4f0c8" stroke-width="1.6" stroke-opacity="0.7" d="M52,239 C70,238.5 85,238 99,237.6"/>
<path stroke="#ffffff" stroke-width="1.2" stroke-opacity="0.5" d="M52,235 C60,234.8 68,234.6 76,234.6"/>
<path stroke="#ffffff" stroke-width="2.4" stroke-opacity="0.95" d="M99,237.6 C110,237 135,236.2 145,237 C155,238 165,240 169.3,242.1 C171,244 167,245.5 160,246"/>
<path stroke="#ffffff" stroke-width="2" stroke-opacity="0.75" d="M160,246 C150,247 135,250 125,253.5 C118,256 112,259 112,260.5 C113,263 118,264 125,264.7"/>
<path stroke="#ffffff" stroke-width="2" stroke-opacity="0.8" d="M125,264.7 C135,266 155,266.7 175,266.7"/>
<path stroke="#fffbe8" stroke-width="1.4" stroke-opacity="0.55" d="M175,266.7 C180,266.7 185,266.5 189,266"/>
<path stroke="#ffffff" stroke-width="1" stroke-opacity="0.5" d="M144,240 C152,241 158,243 160,245"/>
</g>
<!-- flying crane -->
<g transform="translate(-236,-79)">
<path fill="#f8f0cc" d="M287.5,97.5 C290,96.5 293,97 295,100 C297,103 299.5,107 300.5,110 C301,112 300.5,113.5 299,114 L292.5,114.5 C291,112 289,110 288.5,107 C288,105 287.5,103 288.5,101.5 C288,100 287.5,99 287.5,97.5 Z"/>
<path fill="#f8f0cc" d="M300,112 C304,108 309,105 314,103.5 C318,102.5 322,102 325,102.5 C323.5,103.5 324,104.5 322.5,105.5 C320,106.5 316,107.5 313,109 C310,111 308,113 306,114.5 L301,115 Z"/>
<path fill="#fffefa" d="M295.5,113.5 C300,112 305,112.5 309,114 C312,115.5 313,118 312,120.5 C310.5,123 306,124.5 302,124.5 C299,124.5 297,123.5 296,122 Z"/>
<path fill="#272817" d="M287,117.5 C291,115.5 295,114 299.5,114 C298.5,117 298,120 297.5,124 C295,123.5 293,122.5 291,121 C292,120.5 290.5,120 289,119.5 C290,119 288.5,118.5 287,117.5 Z"/>
<path fill="none" stroke="#2a2018" stroke-width="1.3" stroke-linecap="round" d="M309,121 C312,118.5 315.5,116 318.5,113.8"/>
<circle cx="319.5" cy="113" r="0.9" fill="#e8a898"/>
<path fill="none" stroke="#dfae8c" stroke-width="1.6" stroke-linecap="round" d="M282,131.5 C286,128 290,125 294,122.5"/>
</g>
<!-- standing crane -->
<g transform="translate(-236,-79)">
<path fill="none" stroke="#4a3528" stroke-width="0.7" d="M452.5,335.5 L457.5,338.5 L459,337.5"/>
<path fill="none" stroke="#3a2a22" stroke-width="1.3" stroke-linecap="round" d="M457.5,339.5 C455,341.5 452.5,345 451.8,349"/>
<path fill="#fcfbf4" d="M451.5,348 C450,353 450.5,358 453.5,362.5 C456.5,366.5 460.5,369.5 465,370 C468,370 470,368 469,365 C467,361 464,357 460,354 C457,352 454.5,350 453.5,346 C452.8,346 452,346.8 451.5,348 Z"/>
<path fill="#4c2a22" d="M460.5,364 C463,362 466.5,362 469,363.5 C470.5,365.5 470.5,369 468.5,370.8 C466.5,372 464,371.8 462.5,370.5 C461,369 460.2,366.5 460.5,364 Z"/>
<path fill="none" stroke="#6b5040" stroke-width="0.8" d="M457.8,370 L456.5,385.5 M463.5,371 L462.8,383 M454.5,386.3 L458.5,385.8 M461,383.8 L464.5,383.2"/>
</g>
</svg>
</div>
<div class="abs" style="left:647px;top:432px;width:53px;height:23px;background:rgba(60,60,60,0.2)"></div>
<div class="t" id="wm" style="left:647.5px;top:438px;font-size:12px;color:#f8f8f8;will-change:transform">汽车之家</div>
</body></html>
